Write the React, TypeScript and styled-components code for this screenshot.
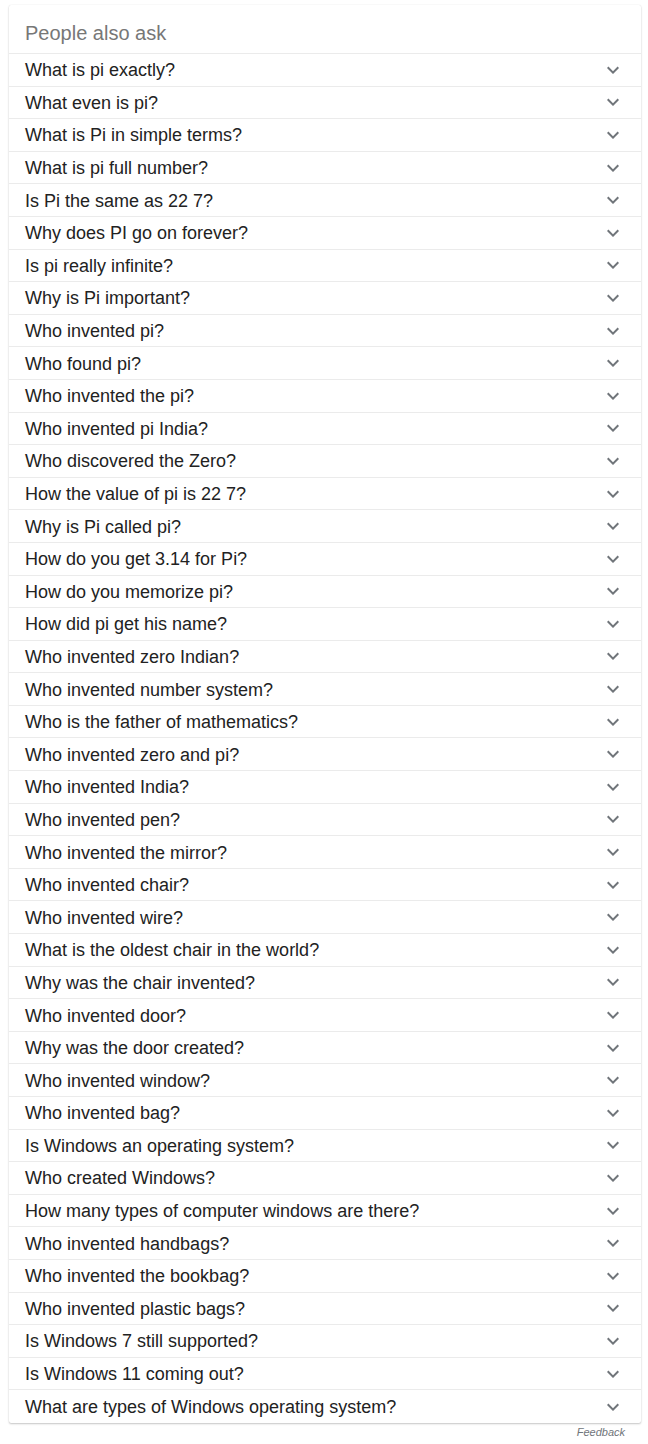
import React from 'react';
import styled, { createGlobalStyle } from 'styled-components';

const GlobalStyle = createGlobalStyle`
  html, body {
    margin: 0;
    padding: 0;
    background: #fff;
  }
  body {
    font-family: "Liberation Sans", Arial, sans-serif;
  }
`;

const Page = styled.div`
  padding: 5px 7px 0 9px;
`;

const Card = styled.div`
  background: #fff;
  border-radius: 2px;
  box-shadow: 0 1px 2px rgba(0, 0, 0, 0.22), 0 0 1px rgba(0, 0, 0, 0.12);
`;

const Header = styled.div`
  height: 49px;
  box-sizing: border-box;
  padding: 9px 16px 0;
  display: flex;
  align-items: center;
  font-size: 20px;
  color: #777;
  border-bottom: 1px solid #ebebeb;
`;

const Row = styled.div<{ $last?: boolean }>`
  height: 32.6px;
  box-sizing: border-box;
  display: flex;
  align-items: center;
  justify-content: space-between;
  padding: 2px 16px 0 16px;
  border-bottom: ${p => (p.$last ? 'none' : '1px solid #ebebeb')};
`;

const Question = styled.span`
  font-size: 18px;
  color: #222;
  white-space: nowrap;
`;

const Chevron = styled.svg`
  width: 24px;
  height: 24px;
  fill: #70757a;
  flex-shrink: 0;
  margin-top: -2px;
`;

const Footer = styled.div`
  display: flex;
  justify-content: flex-end;
  padding: 3px 16px 0 0;
`;

const FeedbackLink = styled.a`
  font-size: 11px;
  font-style: italic;
  color: #70757a;
  text-decoration: none;
`;

const questions = [
  'What is pi exactly?',
  'What even is pi?',
  'What is Pi in simple terms?',
  'What is pi full number?',
  'Is Pi the same as 22 7?',
  'Why does PI go on forever?',
  'Is pi really infinite?',
  'Why is Pi important?',
  'Who invented pi?',
  'Who found pi?',
  'Who invented the pi?',
  'Who invented pi India?',
  'Who discovered the Zero?',
  'How the value of pi is 22 7?',
  'Why is Pi called pi?',
  'How do you get 3.14 for Pi?',
  'How do you memorize pi?',
  'How did pi get his name?',
  'Who invented zero Indian?',
  'Who invented number system?',
  'Who is the father of mathematics?',
  'Who invented zero and pi?',
  'Who invented India?',
  'Who invented pen?',
  'Who invented the mirror?',
  'Who invented chair?',
  'Who invented wire?',
  'What is the oldest chair in the world?',
  'Why was the chair invented?',
  'Who invented door?',
  'Why was the door created?',
  'Who invented window?',
  'Who invented bag?',
  'Is Windows an operating system?',
  'Who created Windows?',
  'How many types of computer windows are there?',
  'Who invented handbags?',
  'Who invented the bookbag?',
  'Who invented plastic bags?',
  'Is Windows 7 still supported?',
  'Is Windows 11 coming out?',
  'What are types of Windows operating system?',
];

const ExpandIcon = () => (
  <Chevron viewBox="0 0 24 24">
    <path d="M7.41 8.59L12 13.17l4.59-4.58L18 10l-6 6-6-6 1.41-1.41z" />
  </Chevron>
);

export default function App() {
  return (
    <Page>
      <GlobalStyle />
      <Card>
        <Header>People also ask</Header>
        {questions.map((q, i) => (
          <Row key={i} $last={i === questions.length - 1}>
            <Question>{q}</Question>
            <ExpandIcon />
          </Row>
        ))}
      </Card>
      <Footer>
        <FeedbackLink href="#">Feedback</FeedbackLink>
      </Footer>
    </Page>
  );
}
